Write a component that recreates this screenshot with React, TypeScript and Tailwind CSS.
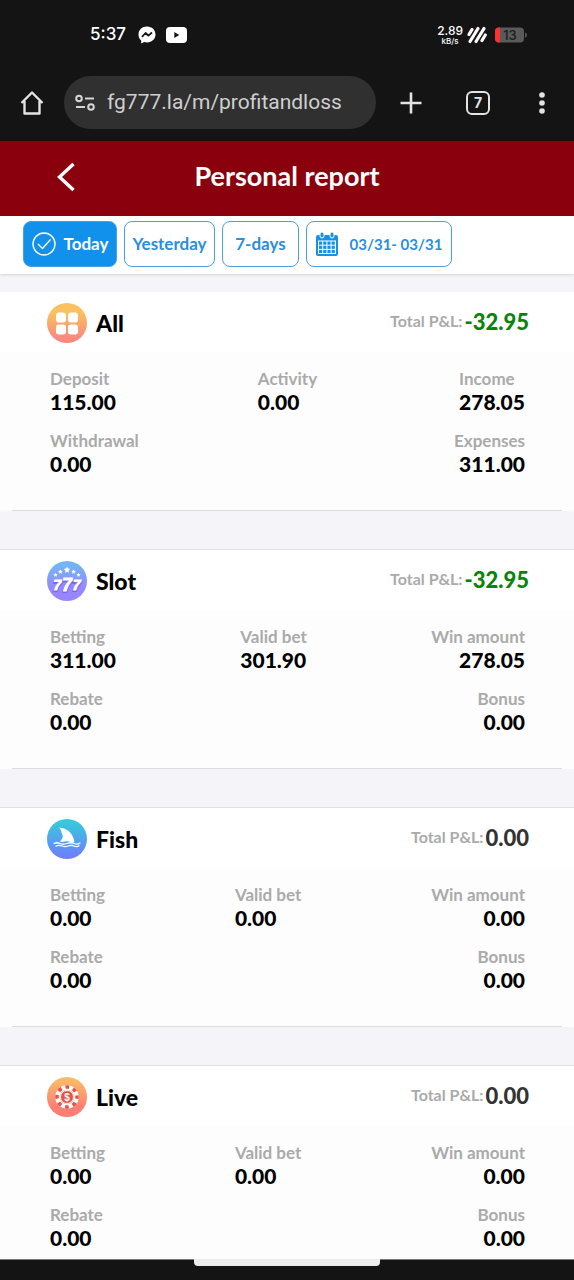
import { useState } from "react";
import type { ReactNode } from "react";

type Stat = { label: string; value: string };

type Report = {
  name: string;
  icon: ReactNode;
  total: string;
  rows: Stat[][];
};

function AllIcon() {
  return (
    <svg viewBox="0 0 40 40" className="size-10 shrink-0" aria-hidden="true">
      <defs>
        <linearGradient id="all-bg" x1="0" y1="0" x2="0" y2="1">
          <stop offset="0.25" stopColor="#fbc05f" />
          <stop offset="0.85" stopColor="#fa8a80" />
        </linearGradient>
      </defs>
      <circle cx="20" cy="20" r="20" fill="url(#all-bg)" />
      <g fill="#fff">
        <rect x="9" y="9.500" width="10" height="10" rx="3" />
        <rect x="21" y="9.500" width="10" height="10" rx="3" />
        <rect x="9" y="21.500" width="10" height="10" rx="3" />
        <rect x="21" y="21.500" width="10" height="10" rx="3" />
      </g>
    </svg>
  );
}

const STARS = [
  { x: 8.5, y: 14, r: 2.2 },
  { x: 13.4, y: 10.8, r: 2.4 },
  { x: 20, y: 9, r: 3.4 },
  { x: 26.6, y: 10.8, r: 2.4 },
  { x: 31.5, y: 14, r: 2.2 },
];

const SEVENS = [
  { x: 10.5, y: 29, size: 15 },
  { x: 29.5, y: 29, size: 15 },
  { x: 20, y: 30, size: 18 },
];

function starPoints(x: number, y: number, r: number): string {
  return Array.from({ length: 10 }, (_, i) => {
    const radius = i % 2 === 0 ? r : r * 0.5;
    const angle = (Math.PI / 5) * i - Math.PI / 2;
    return `${x + radius * Math.cos(angle)},${y + radius * Math.sin(angle)}`;
  }).join(" ");
}

function SlotIcon() {
  return (
    <svg viewBox="0 0 40 40" className="size-10 shrink-0" aria-hidden="true">
      <defs>
        <linearGradient id="slot-bg" x1="0" y1="0" x2="0" y2="1">
          <stop offset="0.1" stopColor="#72b5f8" />
          <stop offset="0.7" stopColor="#9687fc" />
        </linearGradient>
      </defs>
      <circle cx="20" cy="20" r="20" fill="url(#slot-bg)" />
      {STARS.map((s) => (
        <polygon key={s.x} points={starPoints(s.x, s.y, s.r)} fill="#fff" />
      ))}
      <g
        fontFamily="'Liberation Sans', sans-serif"
        fontWeight="700"
        fontStyle="italic"
        textAnchor="middle"
      >
        {SEVENS.map((s) => (
          <g key={s.x} fontSize={s.size}>
            <text x={s.x} y={s.y + 0.5} fill="#7a66e4" stroke="#7a66e4" strokeWidth="2.200" aria-hidden="true">
              7
            </text>
            <text x={s.x} y={s.y} fill="#fff" stroke="#fff" strokeWidth=".9">
              7
            </text>
          </g>
        ))}
      </g>
    </svg>
  );
}

function FishIcon() {
  return (
    <svg viewBox="0 0 40 40" className="size-10 shrink-0" aria-hidden="true">
      <defs>
        <linearGradient id="fish-bg" x1="0" y1="0" x2="0" y2="1">
          <stop offset="0.1" stopColor="#38c8dc" />
          <stop offset="0.9" stopColor="#6b82fb" />
        </linearGradient>
      </defs>
      <circle cx="20" cy="20" r="20" fill="url(#fish-bg)" />
      <path
        d="M12 8.500C20 9 26 14 27.500 23C24 24 21 21.500 18 22.500C16 23 14.500 23 13 22.500C16 19.500 16.500 17 15 15C14.500 13 14 10.500 12 8.500Z"
        fill="#fff"
      />
      <g fill="none" stroke="#fff" strokeWidth="1.300" strokeLinecap="round">
        <path d="M7 24.500q3-1.500 6 0t7 0t7 0t6-.5" />
        <path d="M9 27q3-1.300 6 0t6 0t6 0t5-.3" />
      </g>
    </svg>
  );
}

function LiveIcon() {
  return (
    <svg viewBox="0 0 40 40" className="size-10 shrink-0" aria-hidden="true">
      <defs>
        <linearGradient id="live-bg" x1="0" y1="0" x2="0" y2="1">
          <stop offset="0.1" stopColor="#fbb968" />
          <stop offset="0.75" stopColor="#fb7f74" />
        </linearGradient>
      </defs>
      <circle cx="20" cy="20" r="20" fill="url(#live-bg)" />
      <circle cx="20" cy="20" r="9.500" fill="none" stroke="#fff" strokeWidth="4.500" />
      <circle
        cx="20"
        cy="20"
        r="10"
        fill="none"
        stroke="#ea4f45"
        strokeWidth="3.500"
        strokeDasharray="3.700 4.154"
        strokeDashoffset="1.850"
      />
      <circle cx="20" cy="20" r="6.500" fill="#ea4f45" stroke="#fff" strokeWidth="1" />
      <text
        x="20"
        y="23.500"
        fill="#fff"
        fontFamily="'Liberation Sans', sans-serif"
        fontSize="10"
        fontWeight="700"
        textAnchor="middle"
      >
        $
      </text>
    </svg>
  );
}

const zero = (label: string): Stat => ({ label, value: "0.00" });

const emptyRows: Stat[][] = [
  [zero("Betting"), zero("Valid bet"), zero("Win amount")],
  [zero("Rebate"), zero("Bonus")],
];

const reports: Report[] = [
  {
    name: "All",
    icon: <AllIcon />,
    total: "-32.95",
    rows: [
      [
        { label: "Deposit", value: "115.00" },
        zero("Activity"),
        { label: "Income", value: "278.05" },
      ],
      [zero("Withdrawal"), { label: "Expenses", value: "311.00" }],
    ],
  },
  {
    name: "Slot",
    icon: <SlotIcon />,
    total: "-32.95",
    rows: [
      [
        { label: "Betting", value: "311.00" },
        { label: "Valid bet", value: "301.90" },
        { label: "Win amount", value: "278.05" },
      ],
      [zero("Rebate"), zero("Bonus")],
    ],
  },
  { name: "Fish", icon: <FishIcon />, total: "0.00", rows: emptyRows },
  { name: "Live", icon: <LiveIcon />, total: "0.00", rows: emptyRows },
];

function StatusBar() {
  return (
    <div className="flex h-[70px] items-center justify-between pl-[90px] pr-[46px] text-white">
      <div className="flex items-center gap-3">
        <span className="font-['Inter',sans-serif] text-[17px] font-medium">5:37</span>
        <svg viewBox="0 0 18 18" className="size-[18px]" aria-hidden="true">
          <path
            d="M9 .5C4 .5.5 4 .5 8.500c0 2.500 1 4.500 2.700 6v3l2.900-1.500c.9.300 1.900.4 2.900.4 5 0 8.500-3.500 8.500-7.900S14 .5 9 .5Z"
            fill="#fff"
          />
          <path
            d="M4 10.800 7.600 7l2.700 2.600L14 6.500"
            fill="none"
            stroke="#141414"
            strokeWidth="1.800"
            strokeLinejoin="round"
          />
        </svg>
        <svg viewBox="0 0 21 16" className="-ml-[2px] h-4 w-[21px]" aria-hidden="true">
          <rect width="21" height="16" rx="4" fill="#fff" />
          <path d="M8.300 5v6l5-3z" fill="#141414" />
        </svg>
      </div>
      <div className="flex items-center gap-1">
        <div className="flex flex-col items-center font-['Inter',sans-serif] font-medium">
          <span className="text-[12px] leading-[12px]">2.89</span>
          <span className="text-[8px] leading-[8px]">kB/s</span>
        </div>
        <svg viewBox="0 0 20 18" className="h-[18px] w-5" aria-hidden="true">
          <g stroke="#fff" strokeWidth="3.200" strokeLinecap="round">
            <path d="M2 8.500 5 3.500" />
            <path d="M3 15.500 11 2.500" />
            <path d="M9 15.500 17 2.500" />
            <path d="M15 14.500 18.300 9" />
          </g>
        </svg>
        <svg viewBox="0 0 33 16" className="ml-1 h-4 w-[33px]" aria-hidden="true">
          <rect width="29" height="15" y=".5" rx="4" fill="#5a5a5a" />
          <path d="M4 .5h1v15H4a4 4 0 0 1-4-4v-7a4 4 0 0 1 4-4Z" fill="#fa3232" />
          <path d="M30 5.500q2 .5 2 2.500t-2 2.500z" fill="#5a5a5a" />
          <text
            x="15"
            y="12.500"
            fill="#1c1c1c"
            fontFamily="Inter, sans-serif"
            fontSize="13"
            fontWeight="500"
            textAnchor="middle"
          >
            13
          </text>
        </svg>
      </div>
    </div>
  );
}

function BrowserBar() {
  return (
    <div className="flex items-center pb-3 pl-5 pr-7 pt-[6px] text-[#e3e3e3]">
      <button type="button" aria-label="Home" className="shrink-0">
        <svg viewBox="0 0 24 26" className="h-[26px] w-6" aria-hidden="true">
          <path
            d="M1.500 13 12 2.500 22.500 13M4.500 11v12.500h15V11"
            fill="none"
            stroke="currentColor"
            strokeWidth="2.400"
            strokeLinejoin="round"
          />
        </svg>
      </button>
      <div className="ml-5 flex h-[53px] min-w-0 flex-1 items-center gap-3 rounded-full bg-[#303030] pl-[11px] pr-4">
        <svg viewBox="0 0 20 18" className="h-[18px] w-5 shrink-0" aria-hidden="true">
          <g fill="none" stroke="#d6d6d6" strokeWidth="2">
            <circle cx="4" cy="4.500" r="2.800" />
            <path d="M10 4.500h9" />
            <circle cx="16" cy="13" r="2.800" />
            <path d="M1 13h9" />
          </g>
        </svg>
        <input
          type="text"
          aria-label="Address"
          defaultValue="fg777.la/m/profitandloss"
          className="w-full min-w-0 bg-transparent font-['Roboto',sans-serif] text-[21px] text-[#cfcfcf] outline-none"
        />
      </div>
      <button type="button" aria-label="New tab" className="ml-6 shrink-0">
        <svg viewBox="0 0 22 22" className="size-[22px]" aria-hidden="true">
          <path d="M11 .5v21M.5 11h21" stroke="currentColor" strokeWidth="2.600" />
        </svg>
      </button>
      <button
        type="button"
        aria-label="Tabs"
        className="ml-11 flex size-6 shrink-0 items-center justify-center rounded-md border-2 border-[#e3e3e3] font-['Inter',sans-serif] text-[14px] font-bold"
      >
        7
      </button>
      <button type="button" aria-label="Menu" className="ml-12 shrink-0">
        <svg viewBox="0 0 8 22" className="h-[22px] w-2" aria-hidden="true">
          <g fill="currentColor">
            <circle cx="4" cy="3" r="2.800" />
            <circle cx="4" cy="11" r="2.800" />
            <circle cx="4" cy="19" r="2.800" />
          </g>
        </svg>
      </button>
    </div>
  );
}

function CalendarIcon() {
  return (
    <svg viewBox="0 0 22 24" className="h-6 w-[22px] shrink-0" aria-hidden="true">
      <rect y="3" width="22" height="21" rx="2" fill="#1890e4" />
      <g fill="#1890e4" stroke="#fff" strokeWidth="1">
        <rect x="4" y="0" width="4" height="6" rx="2" />
        <rect x="14" y="0" width="4" height="6" rx="2" />
      </g>
      <rect x="2" y="8.500" width="18" height="13.500" fill="#fff" />
      <g fill="#1890e4">
        {[9.5, 13.7, 17.9].map((y) =>
          [3, 7.2, 11.4, 15.6].map((x) => (
            <rect key={`${x}-${y}`} x={x} y={y} width="3.200" height="3.200" />
          ))
        )}
      </g>
    </svg>
  );
}

function DateTabs() {
  const [active, setActive] = useState("Today");
  const tabs = [
    { name: "Today", width: "w-[94px]" },
    { name: "Yesterday", width: "w-[91px]" },
    { name: "7-days", width: "w-[77px]" },
  ];
  const base =
    "flex h-[46px] items-center justify-center whitespace-nowrap rounded-lg border border-[#4a9fe3] font-bold";

  return (
    <div className="flex gap-[7px] bg-white px-[23px] pb-[7px] pt-[5px] shadow-sm">
      {tabs.map((tab) => (
        <button
          key={tab.name}
          type="button"
          onClick={() => setActive(tab.name)}
          className={`${base} gap-2 text-[17px] ${tab.width} ${
            active === tab.name ? "bg-[#1291ec] text-white" : "bg-white text-[#2a8fdc]"
          }`}
        >
          {active === tab.name && (
            <svg viewBox="0 0 24 24" className="size-6 shrink-0" aria-hidden="true">
              <g fill="none" stroke="#fff" strokeWidth="1.400">
                <circle cx="12" cy="12" r="11" />
                <path d="m6 12 4.500 4.500 8-9" />
              </g>
            </svg>
          )}
          {tab.name}
        </button>
      ))}
      <button type="button" className={`${base} w-[146px] gap-3 bg-white text-[15px] text-[#2a8fdc]`}>
        <CalendarIcon />
        03/31- 03/31
      </button>
    </div>
  );
}

function ReportCard({ report, first }: { report: Report; first: boolean }) {
  const negative = report.total.startsWith("-");

  return (
    <section className={`bg-[#fdfdfd] ${first ? "" : "border-t border-[#e2e2e6]"}`}>
      <div className="flex h-[60px] items-center bg-white pl-[47px] pr-[45px] pt-[2px]">
        {report.icon}
        <h2 className="ml-[9px] text-[23px] font-black text-black">{report.name}</h2>
        <div className="mb-1 ml-auto flex items-center gap-[2px]">
          <span className="text-[16px] font-bold text-[#aaa]">Total P&amp;L:</span>
          <span
            className={`text-[22px] font-black ${negative ? "text-[#0a840a]" : "text-[#333]"}`}
          >
            {report.total}
          </span>
        </div>
      </div>
      <div className="flex flex-col gap-4 pb-[34px] pl-[50px] pr-[49px] pt-4">
        {report.rows.map((row, i) => (
          <dl key={i} className="flex justify-between">
            {row.map((stat, j) => (
              <div
                key={stat.label}
                className={j === row.length - 1 && stat.label !== "Income" ? "text-right" : ""}
              >
                <dt className="text-[17px] font-bold leading-[22px] text-[#aaa]">{stat.label}</dt>
                <dd className="text-[21px] font-black leading-6 text-black">{stat.value}</dd>
              </div>
            ))}
          </dl>
        ))}
      </div>
      <hr className="mx-3 border-[#dcdcdf]" />
    </section>
  );
}

export default function App() {
  return (
    <div className="flex h-screen flex-col overflow-hidden bg-[#141414] font-['Lato',sans-serif]">
      <div className="shrink-0">
        <StatusBar />
        <BrowserBar />
      </div>
      <main className="min-h-0 flex-1 overflow-hidden bg-[#f4f4f9]">
        <header className="grid h-[75px] grid-cols-[1fr_auto_1fr] items-center bg-[#8b000d] pb-1 text-white">
          <button type="button" aria-label="Back" className="ml-14 w-5">
            <svg viewBox="0 0 20 30" className="h-[30px] w-5" aria-hidden="true">
              <path d="M17.500 2 3.500 15l14 13" fill="none" stroke="currentColor" strokeWidth="3.400" />
            </svg>
          </button>
          <h1 className="text-[27px] font-bold">Personal report</h1>
        </header>
        <DateTabs />
        <div className="mt-[18px] flex flex-col gap-[38px]">
          {reports.map((report, i) => (
            <ReportCard key={report.name} report={report} first={i === 0} />
          ))}
        </div>
      </main>
      <footer className="relative h-[21px] shrink-0 border-t border-[#777]">
        <div className="absolute -top-px left-1/2 h-[7px] w-[186px] -translate-x-1/2 rounded-b bg-[#ededed]" />
      </footer>
    </div>
  );
}
